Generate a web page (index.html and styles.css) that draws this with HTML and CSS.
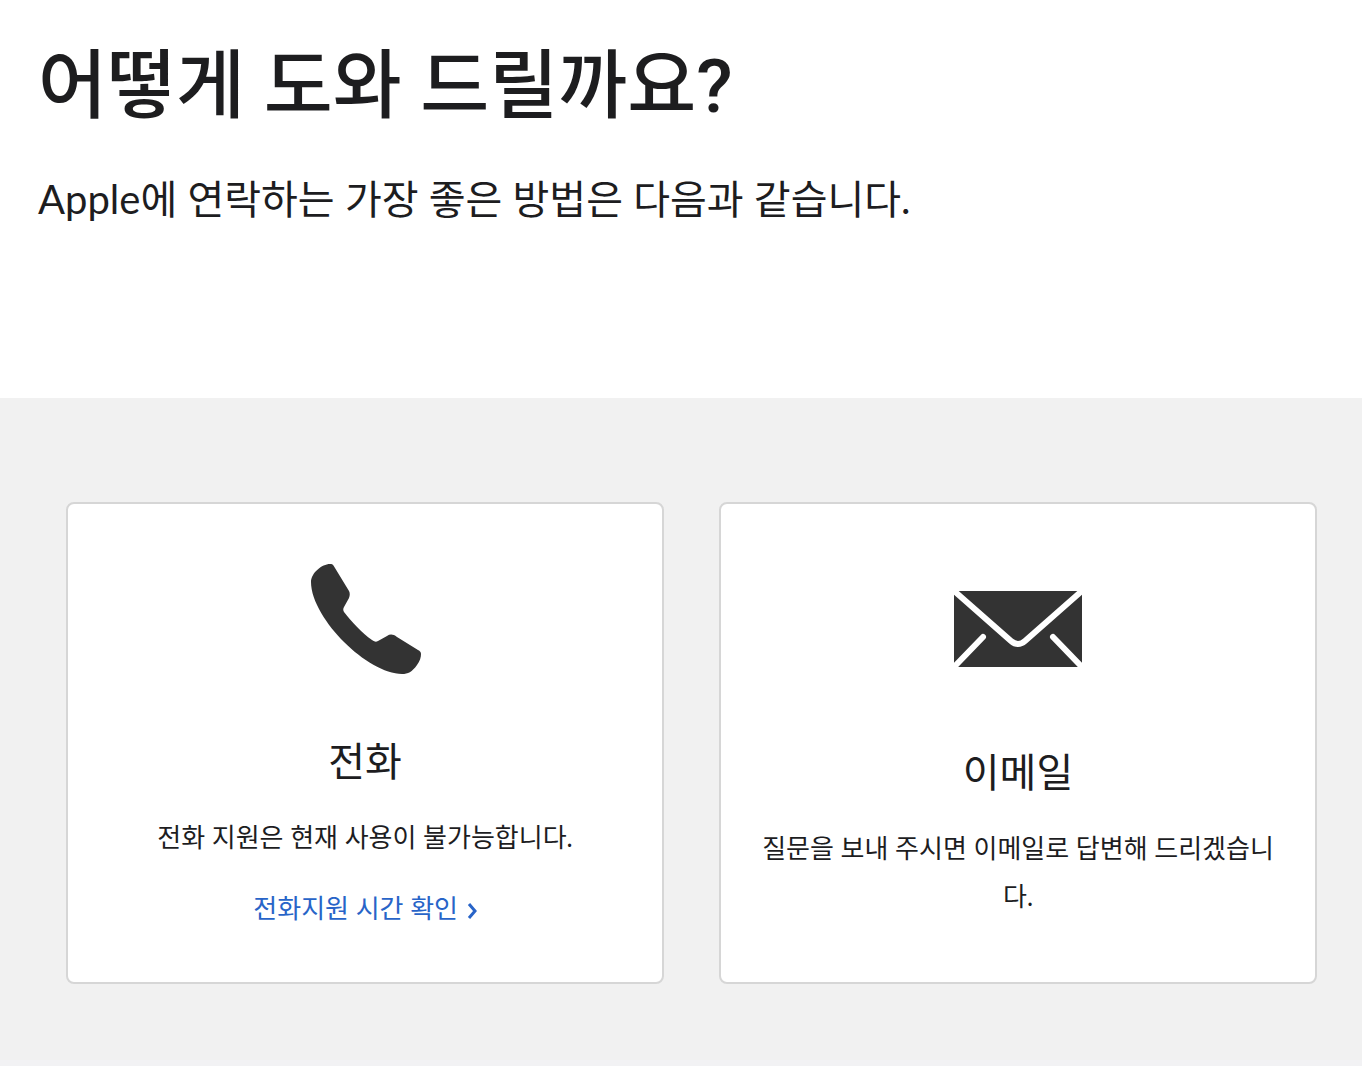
FILE: index.html
```html
<!DOCTYPE html>
<html lang="ko">
<head>
    <meta charset="UTF-8">
    <meta name="viewport" content="width=device-width, initial-scale=1.0">
    <title>Apple 지원</title>
    <link rel="stylesheet" href="styles.css">
</head>
<body>
    <header class="intro">
        <h1>어떻게 도와 드릴까요?</h1>
        <p>Apple에 연락하는 가장 좋은 방법은 다음과 같습니다.</p>
    </header>

    <main class="options">
        <section class="card">
            <svg class="icon icon-phone" viewBox="0 0 112 112" aria-hidden="true">
                <path d="M21 1C13 1 2 10 2 19C2 38 18 62 35 79C53 97 76 111 93 111C99 111 103 109 108 102C111 98 112 94 112 91C112 89 111 88 109 87L88 74C84 71 81 71 78 73L69 78C67 79 66 79 63 77C53 70 42 58 35 49C34 47 34 46 35 44L40 35C41 32 41 30 40 28L26 5C24 1 23 1 21 1Z"/>
            </svg>
            <h2>전화</h2>
            <p>전화 지원은 현재 사용이 불가능합니다.</p>
            <a class="more" href="#">전화지원 시간 확인
                <svg class="chevron" viewBox="0 0 10 16" aria-hidden="true"><path d="M2 1L8 8L2 15"/></svg>
            </a>
        </section>

        <section class="card card-email">
            <svg class="icon icon-mail" viewBox="0 0 128 76" aria-hidden="true">
                <path d="M0 0H128V76H0Z"/>
                <path class="fold" d="M-1 -1L57 50Q64 56 71 50L129 -1M-1 77L29 46M129 77L99 46"/>
            </svg>
            <h2>이메일</h2>
            <p>질문을 보내 주시면 이메일로 답변해 드리겠습니다.</p>
        </section>
    </main>

    <footer class="footer"></footer>
</body>
</html>
```

FILE: styles.css
```css
* {
    box-sizing: border-box;
}

body {
    margin: 0;
    min-height: 100vh;
    display: flex;
    flex-direction: column;
    font-family: Lato, "Noto Sans CJK KR", sans-serif;
    background-color: #fff;
    color: #1d1d1f;
}

h1, h2, p {
    margin: 0;
}

.intro {
    padding: 34px 38px 168px;
}

.intro h1 {
    font-family: Roboto, "Noto Sans CJK KR", sans-serif;
    font-size: 75px;
    line-height: 104px;
    font-weight: 500;
}

.intro p {
    margin-top: 30px;
    font-size: 40px;
    line-height: 62px;
}

.options {
    flex: 1;
    display: grid;
    grid-template-columns: 1fr 1fr;
    gap: 55px;
    padding: 104px 45px 76px 66px;
    background-color: #f1f1f1;
}

.card {
    padding: 59px 40px 48px;
    display: flex;
    flex-direction: column;
    align-items: center;
    text-align: center;
    background-color: #fff;
    border: 2px solid #d6d6d6;
    border-radius: 8px;
}

.card-email {
    padding-top: 87px;
}

.icon {
    fill: #333;
}

.icon-phone {
    width: 112px;
    height: 112px;
}

.icon-mail {
    width: 128px;
    height: 76px;
}

.fold {
    fill: none;
    stroke: #fff;
    stroke-width: 6;
    stroke-linecap: round;
}

.card h2 {
    margin-top: 56px;
    font-size: 40px;
    line-height: 60px;
    font-weight: 400;
}

.card-email h2 {
    margin-top: 75px;
}

.card p {
    margin-top: 22px;
    font-size: 26px;
    line-height: 48px;
    word-break: break-all;
}

.more {
    margin-top: 23px;
    font-size: 26px;
    line-height: 48px;
    color: #2864c8;
    text-decoration: none;
}

.more:hover {
    text-decoration: underline;
}

.chevron {
    width: 10px;
    height: 16px;
    margin-left: 2px;
    vertical-align: -1px;
    fill: none;
    stroke: currentColor;
    stroke-width: 3;
}

.footer {
    height: 6px;
    background-color: #f2f2f4;
}
```
